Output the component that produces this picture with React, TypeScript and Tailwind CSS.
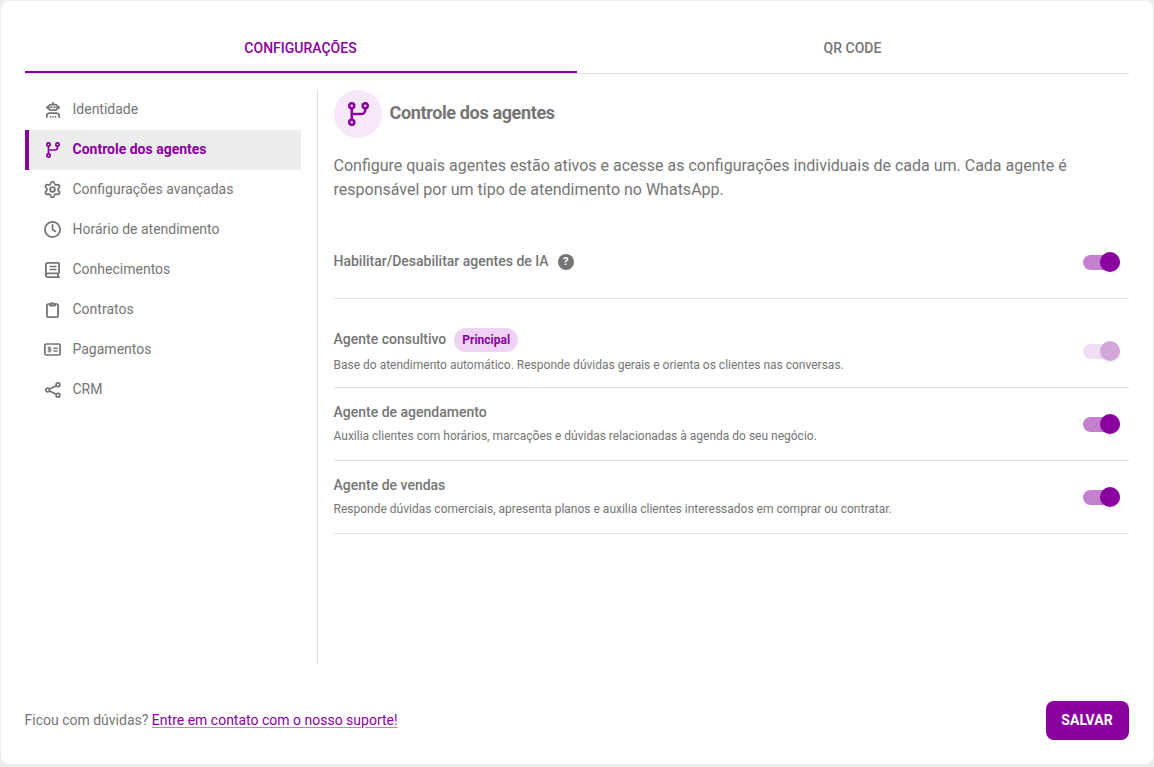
import { Settings } from 'lucide-react';
import { useState, type ReactNode } from 'react';

const line = {
  fill: 'none',
  stroke: 'currentColor',
  strokeWidth: 54,
  strokeLinecap: 'round' as const,
  strokeLinejoin: 'round' as const
};

function RobotIcon() {
  return (
    <svg className="h-4 w-3.5" viewBox="0 0 448 512" {...line}>
      <path d="M224 20v50" />
      <rect x="92" y="84" width="264" height="176" rx="60" />
      <path d="M36 148v48M412 148v48" />
      <path d="M164 168h20M264 168h20" strokeWidth={60} />
      <path d="M27 486v-44a88 88 0 0 1 88-88h218a88 88 0 0 1 88 88v44" />
      <path d="M144 460v26M224 460v26M304 460v26" strokeWidth={46} />
    </svg>
  );
}

function BranchIcon({ className }: { className: string }) {
  return (
    <svg className={className} viewBox="0 0 448 512" {...line}>
      <circle cx="80" cy="80" r="54" />
      <circle cx="368" cy="80" r="54" />
      <circle cx="80" cy="432" r="54" />
      <path d="M80 136v240M80 256h200a88 88 0 0 0 88-88v-32" />
    </svg>
  );
}

function ClockIcon() {
  return (
    <svg className="-mt-px size-[17px]" viewBox="0 0 512 512" {...line}>
      <circle cx="256" cy="256" r="228" />
      <path d="M256 120v136l88 58" />
    </svg>
  );
}

function BookIcon() {
  return (
    <svg className="h-4 w-[15px]" viewBox="0 0 448 512" preserveAspectRatio="none" {...line}>
      <path d="M421 485H88a61 61 0 0 1-61-61V88a61 61 0 0 1 61-61h309a24 24 0 0 1 24 24v288a24 24 0 0 1-24 24H88a61 61 0 0 0-61 61M388 363v122" />
      <path d="M152 144h176M152 240h176" strokeWidth={46} />
    </svg>
  );
}

function ClipboardIcon() {
  return (
    <svg className="h-4 w-[13px]" viewBox="0 0 384 512" preserveAspectRatio="none" {...line}>
      <rect x="27" y="64" width="330" height="421" rx="40" />
      <path d="M112 64c24 0 30-37 80-37s56 37 80 37v36a20 20 0 0 1-20 20H132a20 20 0 0 1-20-20z" strokeWidth={46} />
    </svg>
  );
}

function PaymentIcon() {
  return (
    <svg className="-mt-px h-[15px] w-[17px]" viewBox="0 0 576 512" {...line}>
      <rect x="28" y="68" width="520" height="376" rx="40" strokeWidth={58} />
      <path d="M336 212h110M336 304h110" strokeWidth={50} />
      <path d="M226 208c-44-16-84-10-84 18 0 34 90 22 90 60 0 32-48 36-92 18M186 170v30M186 310v30" strokeWidth={46} />
    </svg>
  );
}

function ShareIcon() {
  return (
    <svg className="h-4 w-4" viewBox="0 0 512 512" {...line}>
      <circle cx="88" cy="256" r="61" />
      <circle cx="416" cy="88" r="61" />
      <circle cx="416" cy="424" r="61" />
      <path d="M145 227l214-110M145 285l214 110" />
    </svg>
  );
}

const menu: { label: string; icon: ReactNode }[] = [
  { label: 'Identidade', icon: <RobotIcon /> },
  { label: 'Controle dos agentes', icon: <BranchIcon className="h-4 w-3.5" /> },
  { label: 'Configurações avançadas', icon: <Settings className="-mt-px shrink-0" size={19} strokeWidth={2.3} /> },
  { label: 'Horário de atendimento', icon: <ClockIcon /> },
  { label: 'Conhecimentos', icon: <BookIcon /> },
  { label: 'Contratos', icon: <ClipboardIcon /> },
  { label: 'Pagamentos', icon: <PaymentIcon /> },
  { label: 'CRM', icon: <ShareIcon /> }
];

function Switch({ label, disabled = false }: { label: string; disabled?: boolean }) {
  const [on, setOn] = useState(true);

  return (
    <button
      role="switch"
      aria-checked={on}
      aria-label={label}
      disabled={disabled}
      onClick={() => setOn(!on)}
      className="mr-[9px] flex h-5 w-[37px] shrink-0 items-center"
    >
      <span className={`flex h-[15px] w-[37px] items-center rounded-full ${
        disabled ? 'bg-[#f0dff3]' : on ? 'bg-[#c47fce]' : 'bg-[#9e9e9e]'
      } ${on ? 'justify-end' : 'justify-start'}`}>
        <span className={`size-5 rounded-full shadow-[0_2px_3px_rgba(0,0,0,0.06)] ${
          disabled ? 'bg-[#d4a6da]' : on ? 'bg-[#8a009e]' : 'bg-white'
        }`} />
      </span>
    </button>
  );
}

function Agent({ name, text }: { name: string; text: string }) {
  return (
    <div className="flex h-[73px] items-center justify-between border-b border-[#e0e0e0]">
      <div className="-ml-[0.5px]">
        <h3 className="text-sm leading-6 font-medium">{name}</h3>
        <p className="text-xs leading-6">{text}</p>
      </div>
      <Switch label={name} />
    </div>
  );
}

export default function App() {
  const [tab, setTab] = useState('Configurações');
  const [active, setActive] = useState('Controle dos agentes');

  return (
    <div className="h-[767px] bg-[#ededed] p-px font-[Roboto,sans-serif] text-[#757575]">
      <div className="flex h-[763px] flex-col rounded-lg bg-white px-6 pt-6">
        {/* Tabs */}
        <div className="flex h-[49px] shrink-0 border-b border-[#e0e0e0]">
          {['Configurações', 'QR Code'].map(t => (
            <button
              key={t}
              onClick={() => setTab(t)}
              className={`h-12 flex-1 border-b-2 pr-px text-sm font-medium uppercase ${
                tab === t ? 'border-[#8a009e] text-[#8a009e]' : 'border-transparent'
              }`}
            >
              {t}
            </button>
          ))}
        </div>

        <div className="mt-4 flex h-[575px] shrink-0">
          {/* Sidebar */}
          <nav className="w-[293px] shrink-0 border-r border-[#e0e0e0] pr-4">
            {menu.map(({ label, icon }) => (
              <button
                key={label}
                onClick={() => setActive(label)}
                className={`flex h-10 w-full items-center border-l-4 pl-[13.5px] text-left text-sm ${
                  active === label ? 'border-[#8a009e] bg-[#ededed] font-bold text-[#8a009e]' : 'border-transparent'
                }`}
              >
                <span className="flex w-5 items-center justify-center">{icon}</span>
                <span className="-mt-0.5 ml-2.5">{label}</span>
              </button>
            ))}
          </nav>

          {/* Agents */}
          <main className="min-w-0 flex-1 pl-4">
            <div className="flex items-center">
              <div className="flex size-12 items-center justify-center rounded-full bg-[#f6e7f9] text-[#8a009e]">
                <BranchIcon className="h-6 w-[21px]" />
              </div>
              <h2 className="-mt-0.5 ml-[7.5px] text-lg leading-6 font-bold tracking-[-0.36px]">Controle dos agentes</h2>
            </div>
            <p className="mt-4 -ml-[0.5px] text-base leading-6">
              Configure quais agentes estão ativos e acesse as configurações individuais de cada um. Cada agente é
              responsável por um tipo de atendimento no WhatsApp.
            </p>

            <div className="mt-6 flex h-[73px] items-center justify-between border-b border-[#e0e0e0]">
              <div className="-ml-[0.5px] flex items-center">
                <span className="-mt-0.5 text-sm font-medium">Habilitar/Desabilitar agentes de IA</span>
                <span className="ml-[9px] flex size-4 items-center justify-center rounded-full bg-[#757575] text-[11px] font-bold text-white">?</span>
              </div>
              <Switch label="Habilitar/Desabilitar agentes de IA" />
            </div>

            <div className="mt-4 flex h-[73px] items-center justify-between border-b border-[#e0e0e0]">
              <div className="-ml-[0.5px] pt-0.5">
                <div className="flex items-center">
                  <h3 className="-mt-0.5 text-sm font-medium">Agente consultivo</h3>
                  <span className="ml-2 rounded-full bg-[#efd3f5] px-2 text-xs leading-6 font-bold text-[#8a009e]">Principal</span>
                </div>
                <p className="mt-px text-xs leading-6">
                  Base do atendimento automático. Responde dúvidas gerais e orienta os clientes nas conversas.
                </p>
              </div>
              <Switch label="Agente consultivo" disabled />
            </div>
            <Agent
              name="Agente de agendamento"
              text="Auxilia clientes com horários, marcações e dúvidas relacionadas à agenda do seu negócio."
            />
            <Agent
              name="Agente de vendas"
              text="Responde dúvidas comerciais, apresenta planos e auxilia clientes interessados em comprar ou contratar."
            />
          </main>
        </div>

        {/* Footer */}
        <footer className="mt-9 flex items-center justify-between">
          <p className="-mt-0.5 -ml-[0.5px] text-sm">
            Ficou com dúvidas?{' '}
            <a href="#" className="text-[#8a009e] underline decoration-[#c47fce] underline-offset-2">Entre em contato com o nosso suporte!</a>
          </p>
          <button className="h-[39px] w-[83px] rounded-lg bg-[#8a009e] pr-px pb-px text-sm font-bold text-white">SALVAR</button>
        </footer>
      </div>
    </div>
  );
}
